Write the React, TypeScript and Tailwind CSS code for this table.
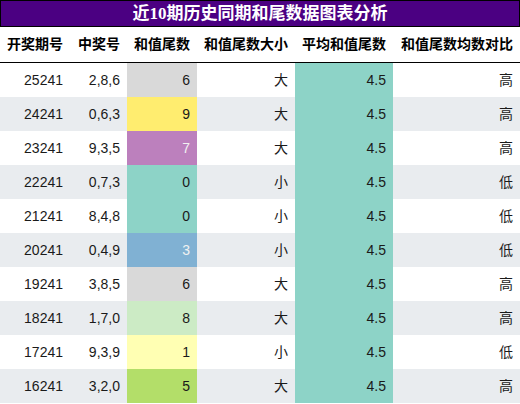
import React from 'react';

type Row = {
  issue: string;
  nums: string;
  tail: number;
  tailBg: string;
  tailLight?: boolean;
  size: string;
  cmp: string;
};

const rows: Row[] = [
  { issue: '25241', nums: '2,8,6', tail: 6, tailBg: 'bg-[#d9d9d9]', size: '大', cmp: '高' },
  { issue: '24241', nums: '0,6,3', tail: 9, tailBg: 'bg-[#ffed6f]', size: '大', cmp: '高' },
  { issue: '23241', nums: '9,3,5', tail: 7, tailBg: 'bg-[#bc80bd]', tailLight: true, size: '大', cmp: '高' },
  { issue: '22241', nums: '0,7,3', tail: 0, tailBg: 'bg-[#8dd3c7]', size: '小', cmp: '低' },
  { issue: '21241', nums: '8,4,8', tail: 0, tailBg: 'bg-[#8dd3c7]', size: '小', cmp: '低' },
  { issue: '20241', nums: '0,4,9', tail: 3, tailBg: 'bg-[#80b1d3]', tailLight: true, size: '小', cmp: '低' },
  { issue: '19241', nums: '3,8,5', tail: 6, tailBg: 'bg-[#d9d9d9]', size: '大', cmp: '高' },
  { issue: '18241', nums: '1,7,0', tail: 8, tailBg: 'bg-[#ccebc5]', size: '大', cmp: '高' },
  { issue: '17241', nums: '9,3,9', tail: 1, tailBg: 'bg-[#ffffb3]', size: '小', cmp: '低' },
  { issue: '16241', nums: '3,2,0', tail: 5, tailBg: 'bg-[#b3de69]', size: '大', cmp: '高' },
];

const headers = ['开奖期号', '中奖号', '和值尾数', '和值尾数大小', '平均和值尾数', '和值尾数均数对比'];
const widths = ['w-[70px]', 'w-[57px]', 'w-[70px]', 'w-[98px]', 'w-[98px]', 'w-[127px]'];

export default function App() {
  return (
    <div
      className="w-[520px] h-[404px] overflow-hidden bg-white text-[#1a1a1a]"
      style={{ fontFamily: '"Liberation Sans", "Noto Sans CJK SC", sans-serif' }}
    >
      <div
        className="h-[27px] bg-[#4b0082] border border-black text-white font-bold text-[17px] flex items-center justify-center leading-none"
        style={{ fontFamily: '"Liberation Serif", "Noto Sans CJK SC", serif' }}
      >
        近10期历史同期和尾数据图表分析
      </div>

      <div className="flex h-[36px] border-b border-black">
        {headers.map((h, i) => (
          <div
            key={h}
            className={`${widths[i]} shrink-0 flex items-center justify-end pr-[7px] text-[14px] font-bold text-black`}
          >
            {h}
          </div>
        ))}
      </div>

      {rows.map((r, idx) => (
        <div key={r.issue} className={`flex h-[34px] text-[14px] ${idx % 2 === 1 ? 'bg-[#e9ecef]' : 'bg-white'}`}>
          <div className="w-[70px] shrink-0 flex items-center justify-end pr-[7px]">{r.issue}</div>
          <div className="w-[57px] shrink-0 flex items-center justify-end pr-[7px]">{r.nums}</div>
          <div
            className={`w-[70px] shrink-0 flex items-center justify-end pr-[7px] ${r.tailBg} ${
              r.tailLight ? 'text-[#f1f1f1]' : ''
            }`}
          >
            {r.tail}
          </div>
          <div className="w-[98px] shrink-0 flex items-center justify-end pr-[7px]">{r.size}</div>
          <div className="w-[98px] shrink-0 flex items-center justify-end pr-[7px] bg-[#8dd3c7]">4.5</div>
          <div className="w-[127px] shrink-0 flex items-center justify-end pr-[7px]">{r.cmp}</div>
        </div>
      ))}
    </div>
  );
}
